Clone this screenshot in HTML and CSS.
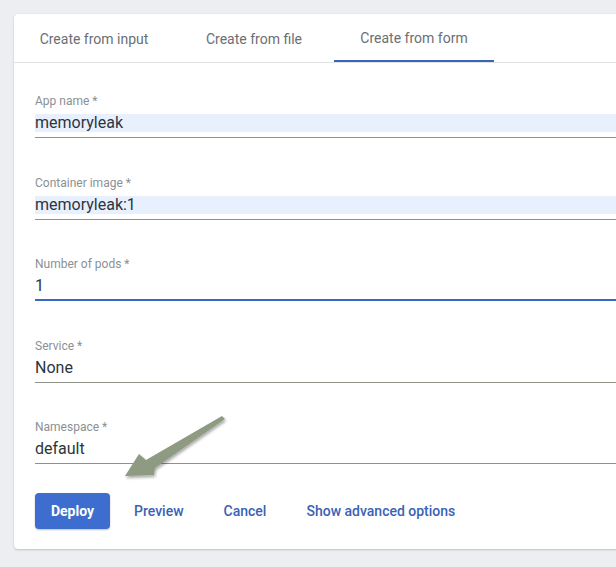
FILE: index.html
```html
<!DOCTYPE html>
<html>
<head>
<meta charset="utf-8">
<link rel="stylesheet" href="styles.css">
</head>
<body>
<div class="card">
  <div class="tabs">
    <div class="tab">Create from input</div>
    <div class="tab">Create from file</div>
    <div class="tab active">Create from form</div>
  </div>
  <form class="form">
    <div class="field">
      <label class="label">App name *</label>
      <div class="input"><span class="value autofill">memoryleak</span></div>
    </div>
    <div class="field">
      <label class="label">Container image *</label>
      <div class="input"><span class="value autofill">memoryleak:1</span></div>
    </div>
    <div class="field">
      <label class="label">Number of pods *</label>
      <div class="input focused"><span class="value">1</span></div>
    </div>
    <div class="field">
      <label class="label">Service *</label>
      <div class="input"><span class="value">None</span></div>
    </div>
    <div class="field">
      <label class="label">Namespace *</label>
      <div class="input"><span class="value">default</span></div>
    </div>
    <div class="actions">
      <button type="button" class="btn primary">Deploy</button>
      <button type="button" class="btn text">Preview</button>
      <button type="button" class="btn text">Cancel</button>
      <button type="button" class="btn text">Show advanced options</button>
    </div>
  </form>
  <svg class="arrow" width="130" height="90" viewBox="0 0 130 90">
    <defs>
      <filter id="sh" x="-20%" y="-20%" width="140%" height="140%">
        <feGaussianBlur in="SourceAlpha" stdDeviation="1.6"/>
        <feOffset dx="1" dy="1.5"/>
        <feComponentTransfer><feFuncA type="linear" slope="0.35"/></feComponentTransfer>
        <feMerge><feMergeNode/><feMergeNode in="SourceGraphic"/></feMerge>
      </filter>
    </defs>
    <polygon filter="url(#sh)" fill="#8e9a82" points="15,74 29,52 36,58 112,14 115,17 45,66 44,73"/>
  </svg>
</div>
</body>
</html>
```

FILE: styles.css
```css
html, body {
  margin: 0;
  padding: 0;
}
body {
  background: #eceef1;
  font-family: Roboto, "Liberation Sans", Arial, sans-serif;
  overflow: hidden;
  width: 616px;
  height: 567px;
}
.card {
  position: relative;
  margin: 14px 0 0 14px;
  width: 640px;
  background: #ffffff;
  border-radius: 4px;
  box-shadow: 0 1px 2px rgba(0,0,0,0.18), 0 0 1px rgba(0,0,0,0.12);
  padding-bottom: 20px;
}
.tabs {
  display: flex;
  height: 48px;
  border-bottom: 1px solid #e0e1e3;
}
.tab {
  width: 160px;
  display: flex;
  align-items: center;
  justify-content: center;
  font-size: 14px;
  color: #6a6f74;
  box-sizing: border-box;
  padding-top: 2px;
}
.tab.active {
  border-bottom: 2px solid #3c64b9;
}
.form {
  display: flex;
  flex-direction: column;
  padding: 31px 0 0 21px;
}
.field {
  display: flex;
  flex-direction: column;
  margin-bottom: 37.5px;
}
.label {
  font-size: 12px;
  line-height: 14px;
  color: #8b9095;
}
.input {
  padding: 6px 0 5px;
  border-bottom: 1px solid #8f9289;
  display: flex;
}
.input.focused {
  border-bottom: 2px solid #3a68c8;
  padding-bottom: 4px;
}
.value {
  flex: 1;
  font-size: 16px;
  line-height: 18px;
  height: 18px;
  color: #2c353e;
}
.autofill {
  background: #e8f0fe;
}
.actions {
  display: flex;
  gap: 8px;
  margin-top: -9px;
}
.btn {
  font-family: Roboto, "Liberation Sans", Arial, sans-serif;
  font-size: 14px;
  height: 36px;
  border: none;
  border-radius: 4px;
  background: transparent;
  padding: 0 16px;
  cursor: pointer;
}
.btn.primary {
  width: 75px;
  padding: 0;
  background: #3d6ecf;
  color: #ffffff;
  font-weight: 700;
  box-shadow: 0 1px 2px rgba(0,0,0,0.25);
}
.btn.text {
  color: #3a62b5;
  font-weight: 500;
}
.arrow {
  position: absolute;
  left: 96px;
  top: 388px;
}
```
